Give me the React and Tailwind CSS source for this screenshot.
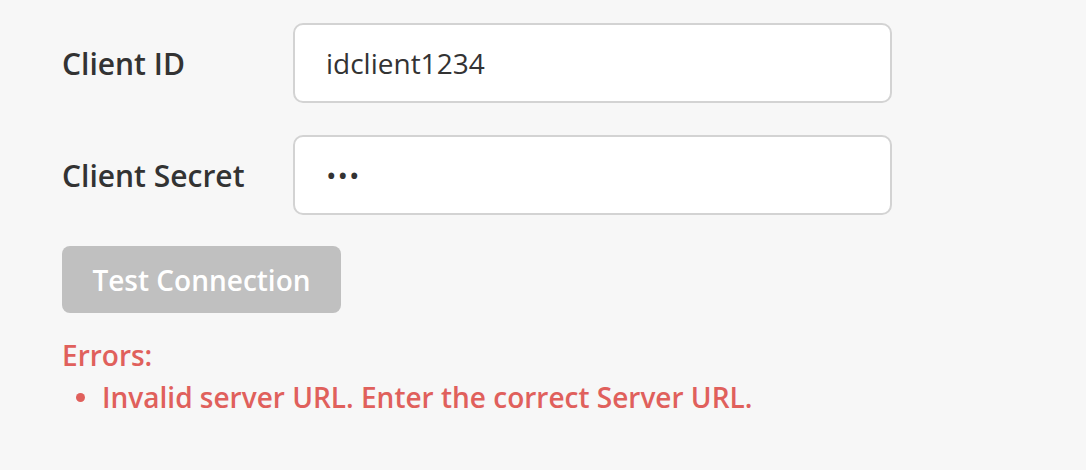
export default function App() {
  return (
    <div className="w-[1086px] h-[470px] bg-[#f7f7f7] pl-[62px] pt-[23px]" style={{ fontFamily: '"Open Sans", sans-serif' }}>
      <div className="flex flex-col gap-[32px]">
        <div className="flex items-center">
          <div className="w-[231px] text-[30px] font-semibold text-[#333333]">Client ID</div>
          <div className="w-[599px] h-[80px] bg-white border-2 border-[#d3d3d3] rounded-[10px] flex items-center pl-[31px] text-[28px] text-[#333333]">idclient1234</div>
        </div>
        <div className="flex items-center">
          <div className="w-[231px] text-[30px] font-semibold text-[#333333]">Client Secret</div>
          <div className="w-[599px] h-[80px] bg-white border-2 border-[#d3d3d3] rounded-[10px] flex items-center pl-[31px] text-[28px] text-[#333333] tracking-[1px]">•••</div>
        </div>
      </div>
      <button className="mt-[31px] w-[279px] h-[67px] bg-[#c0c0c0] rounded-[8px] text-white text-[28px] font-semibold flex items-center justify-center">Test Connection</button>
      <div className="mt-[21px] text-[#e0605c] text-[28px] font-semibold leading-[42px]">
        <div>Errors:</div>
        <ul className="pl-[14px]">
          <li className="flex items-center gap-[17px]">
            <span className="w-[9px] h-[9px] rounded-full bg-[#e0605c] inline-block"></span>
            <span>Invalid server URL. Enter the correct Server URL.</span>
          </li>
        </ul>
      </div>
    </div>
  );
}
